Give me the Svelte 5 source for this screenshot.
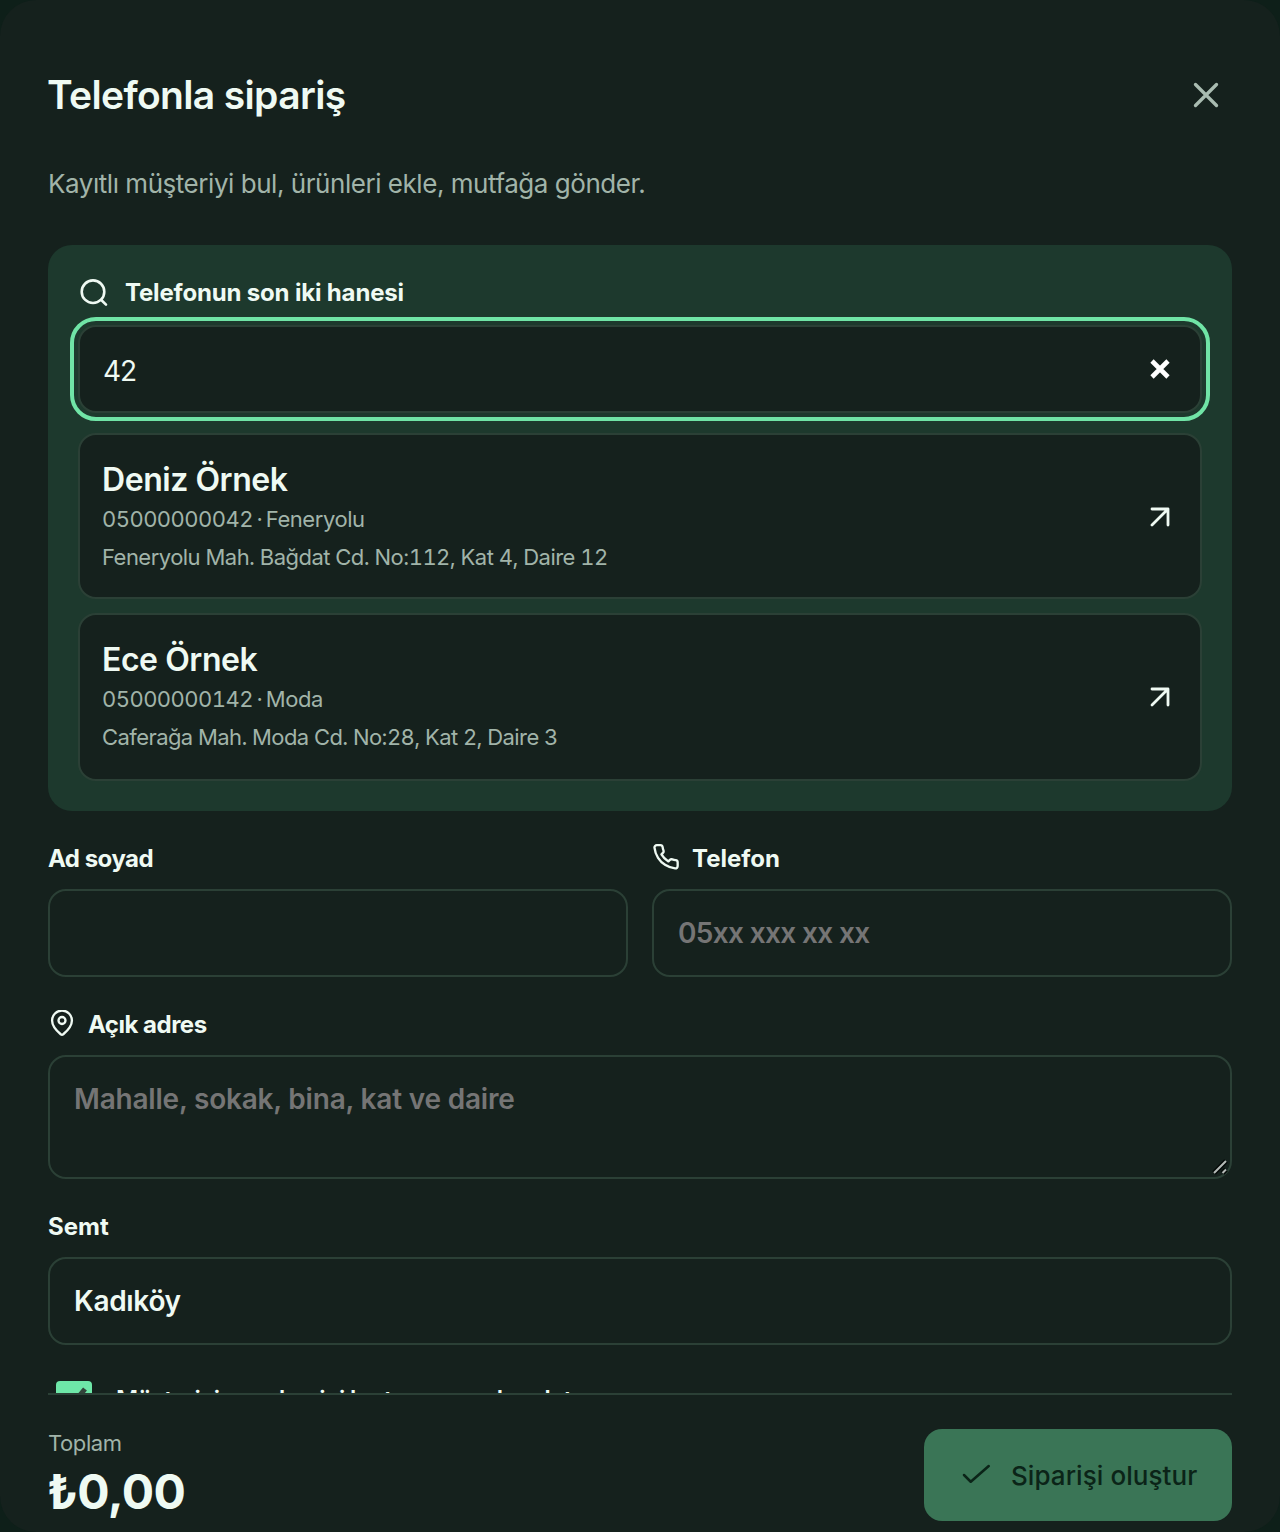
<script>
	let digits = $state('42');
	let name = $state('');
	let phone = $state('');
	let address = $state('');
	let district = $state('Kadıköy');
	let remember = $state(true);

	const customers = [
		{
			name: 'Deniz Örnek',
			phone: '05000000042',
			district: 'Feneryolu',
			address: 'Feneryolu Mah. Bağdat Cd. No:112, Kat 4, Daire 12'
		},
		{
			name: 'Ece Örnek',
			phone: '05000000142',
			district: 'Moda',
			address: 'Caferağa Mah. Moda Cd. No:28, Kat 2, Daire 3'
		}
	];

	const matches = $derived(customers.filter((c) => c.phone.endsWith(digits)));

	function pick(c) {
		name = c.name;
		phone = c.phone;
		address = c.address;
		district = c.district;
	}
</script>

<div class="sheet">
	<div class="content">
		<header>
			<h1>Telefonla sipariş</h1>
			<button class="close" aria-label="Kapat">
				<svg width="40" height="40" viewBox="0 0 24 24"><path d="M18.300 5.700 5.700 18.300M5.700 5.700l12.600 12.600" /></svg>
			</button>
		</header>
		<p class="intro">Kayıtlı müşteriyi bul, ürünleri ekle, mutfağa gönder.</p>

		<section class="lookup">
			<label class="lookup-label" for="digits">
				<svg width="32" height="32" viewBox="0 0 32 32"><circle cx="15" cy="15.700" r="11.300" /><path d="m23.300 24 4.700 4.700" /></svg>
				<span>Telefonun son iki hanesi</span>
			</label>
			<div class="search">
				<input id="digits" bind:value={digits} />
				<button class="clear" aria-label="Temizle" onclick={() => (digits = '')}>
					<svg width="20" height="20" viewBox="0 0 20 20"><path d="m2 2 16 16M18 2 2 18" /></svg>
				</button>
			</div>
			{#each matches as c}
				<button class="customer" onclick={() => pick(c)}>
					<span class="info">
						<strong>{c.name}</strong>
						<span class="meta phone">{c.phone} · <span class="district">{c.district}</span></span>
						<span class="meta address">{c.address}</span>
					</span>
					<svg width="32" height="32" viewBox="0 0 32 32"><path d="M8 9h16v16M8 25 24 9" /></svg>
				</button>
			{/each}
		</section>

		<div class="grid">
			<div class="field">
				<label for="name">Ad soyad</label>
				<input id="name" bind:value={name} />
			</div>
			<div class="field">
				<label class="wide" for="phone">
					<svg width="28" height="28" viewBox="0 1 24 24"><path d="M22 16.92v3a2 2 0 0 1-2.18 2 19.79 19.79 0 0 1-8.63-3.07 19.5 19.5 0 0 1-6-6 19.79 19.79 0 0 1-3.07-8.67A2 2 0 0 1 4.11 2h3a2 2 0 0 1 2 1.72 12.84 12.84 0 0 0 .7 2.81 2 2 0 0 1-.45 2.11L8.09 9.91a16 16 0 0 0 6 6l1.27-1.27a2 2 0 0 1 2.11-.45 12.84 12.84 0 0 0 2.81.7A2 2 0 0 1 22 16.92z" /></svg>
					<span>Telefon</span>
				</label>
				<input id="phone" class="tel" placeholder="05xx xxx xx xx" bind:value={phone} />
			</div>
		</div>

		<div class="field">
			<label for="address">
				<svg width="28" height="28" viewBox="0 1 24 24"><path d="M20.5 10c0 5-5.5 10.2-7.4 11.8a1.8 1.8 0 0 1-2.2 0C9 20.200 3.500 15 3.500 10a8.500 8.500 0 0 1 17 0" /><circle cx="12" cy="10" r="3" /></svg>
				<span>Açık adres</span>
			</label>
			<div class="area">
				<textarea id="address" placeholder="Mahalle, sokak, bina, kat ve daire" bind:value={address}></textarea>
				<svg class="grip" width="18" height="18" viewBox="0 0 18 18">
					<path class="grip-shade" d="M3 15 15 3M11.500 15 15 11.500" />
					<path d="M3 15 15 3M11.500 15 15 11.500" />
				</svg>
			</div>
		</div>

		<div class="field">
			<label class="wide" for="district">Semt</label>
			<input id="district" bind:value={district} />
		</div>

		<label class="remember">
			<input type="checkbox" bind:checked={remember} />
			<span class="box">
				<svg width="36" height="36" viewBox="0 0 36 36"><path d="m8 18 7 7L29 8" /></svg>
			</span>
			<span>Müşteriyi ve adresini bu tarayıcıya kaydet</span>
		</label>
	</div>

	<footer>
		<div class="total">
			<span>Toplam</span>
			<strong>₺0,00</strong>
		</div>
		<button class="submit" disabled>
			<svg width="36" height="36" viewBox="0 0 24 24"><path d="m4 12 4.500 4.500L20.500 6" /></svg>
			<span>Siparişi oluştur</span>
		</button>
	</footer>
</div>

<style>
	:global(body) {
		background: #0e1f19;
	}

	* {
		box-sizing: border-box;
	}

	.sheet {
		display: flex;
		flex-direction: column;
		height: 1532px;
		padding: 0 48px;
		border-radius: 36px;
		background: #15211d;
		color: #effaf3;
		font-family: Inter, sans-serif;
		overflow: hidden;
	}

	button,
	input,
	textarea {
		font: inherit;
		color: inherit;
		margin: 0;
	}

	svg {
		flex: none;
		fill: none;
		stroke: currentColor;
		stroke-width: 2;
		stroke-linecap: round;
		stroke-linejoin: round;
	}

	.content {
		height: 1393px;
		flex: none;
		overflow: hidden;
	}

	header {
		display: flex;
		justify-content: space-between;
		align-items: center;
		height: 88px;
		margin-top: 51px;
	}

	h1 {
		margin: -1px 0 0 -1px;
		font-size: 39px;
		font-weight: 600;
		letter-spacing: -0.65px;
	}

	.close {
		display: grid;
		place-items: center;
		width: 52px;
		height: 88px;
		padding: 0;
		border: 0;
		background: none;
		color: #a9bcb1;
	}

	.intro {
		height: 40px;
		margin: 25px 0 41px;
		font-size: 26px;
		line-height: 40px;
		letter-spacing: -0.46px;
		color: #a1b4a9;
	}

	.lookup {
		height: 566px;
		padding: 30px;
		border-radius: 24px;
		background: #1d392d;
	}

	.lookup-label {
		display: flex;
		align-items: center;
		gap: 15px;
		height: 34px;
		font-size: 24px;
		font-weight: 650;
		letter-spacing: -0.17px;
	}

	.lookup-label svg {
		stroke-width: 2.600;
	}

	.search {
		display: flex;
		align-items: center;
		height: 88px;
		margin: 16px 0 20px;
		padding: 0 30px 0 23px;
		border: 2px solid #2b4036;
		border-radius: 18px;
		outline: 4px solid #70e4a6;
		outline-offset: 4px;
		background: #15211d;
	}

	.search input {
		flex: 1;
		height: auto;
		padding: 4px 0 0;
		border: 0;
		outline: 0;
		background: none;
		font-size: 28px;
		letter-spacing: -1px;
	}

	.clear {
		display: grid;
		padding: 0;
		border: 0;
		background: none;
		color: #fff;
	}

	.clear svg {
		stroke-width: 4.6;
		stroke-linecap: butt;
	}

	.customer {
		display: flex;
		align-items: center;
		justify-content: space-between;
		width: 100%;
		height: 166px;
		margin-bottom: 14px;
		padding: 0 24px 0 22px;
		border: 2px solid #2b4036;
		border-radius: 18px;
		background: #15211d;
		text-align: left;
	}

	.customer:last-child {
		height: 168px;
		margin-bottom: 0;
		padding-bottom: 2px;
	}

	.customer svg {
		stroke-width: 2.800;
	}

	.info {
		display: flex;
		flex-direction: column;
	}

	.info strong {
		font-size: 32px;
		font-weight: 600;
		line-height: 40px;
		padding-top: 4px;
		letter-spacing: -0.45px;
	}

	.meta {
		font-size: 22px;
		line-height: 38px;
		color: #a1b4a9;
		font-variant-numeric: tabular-nums;
	}

	.phone {
		letter-spacing: -0.55px;
		word-spacing: -1.8px;
	}

	.district {
		letter-spacing: -0.45px;
	}

	.address {
		letter-spacing: -0.53px;
	}

	.customer:last-child .address {
		letter-spacing: -0.58px;
	}

	.grid {
		display: grid;
		grid-template-columns: 1fr 1fr;
		gap: 24px;
	}

	.field {
		display: flex;
		flex-direction: column;
		padding-top: 30px;
	}

	.field label {
		display: flex;
		align-items: center;
		gap: 12px;
		height: 34px;
		margin-bottom: 14px;
		font-size: 24px;
		font-weight: 650;
		letter-spacing: -0.5px;
	}

	.field label.wide {
		letter-spacing: 0;
	}

	.field input,
	textarea {
		width: 100%;
		height: 88px;
		padding: 0 24px;
		border: 2px solid #2b4036;
		border-radius: 18px;
		background: #15211d;
		font-size: 28px;
		font-weight: 600;
		letter-spacing: -0.3px;
	}

	.field .tel {
		letter-spacing: -0.65px;
	}

	.area {
		position: relative;
	}

	textarea {
		display: block;
		height: 124px;
		padding: 22px 24px;
		line-height: 40px;
		letter-spacing: -0.2px;
		resize: none;
	}

	.grip {
		position: absolute;
		right: 3px;
		bottom: 3px;
		color: #b4bab7;
		stroke-linecap: butt;
	}

	.grip-shade {
		stroke: #050a08;
		stroke-width: 5;
	}

	input::placeholder,
	textarea::placeholder {
		color: #757575;
		opacity: 1;
	}

	.remember {
		display: flex;
		align-items: center;
		gap: 24px;
		height: 88px;
		margin-top: 10px;
		padding-left: 8px;
		font-size: 24px;
		font-weight: 600;
		letter-spacing: -0.6px;
		white-space: nowrap;
	}

	.remember input {
		display: none;
	}

	.box {
		width: 36px;
		height: 36px;
		border-radius: 4px;
		background: #6ee7a8;
		color: #33443b;
	}

	.box svg {
		stroke-width: 5;
		stroke-linecap: butt;
	}

	footer {
		display: flex;
		justify-content: space-between;
		flex: 1;
		border-top: 2px solid #2b4036;
		padding-top: 34px;
	}

	.total {
		display: flex;
		flex-direction: column;
		margin-top: -1px;
	}

	.total span {
		font-size: 22px;
		line-height: 30px;
		letter-spacing: -0.4px;
		color: #a1b4a9;
	}

	.total strong {
		margin-left: -1px;
		font-size: 48px;
		font-weight: 700;
		line-height: 68px;
		letter-spacing: -0.6px;
	}

	.submit {
		display: flex;
		align-items: center;
		gap: 17px;
		width: 308px;
		height: 92px;
		padding: 0 0 0 34px;
		border: 0;
		border-radius: 18px;
		background: #3a7556;
		color: #0b2418;
		font-size: 26px;
		font-weight: 500;
		letter-spacing: 0.06px;
		white-space: nowrap;
	}

	.submit svg {
		stroke-width: 1.7;
	}
</style>
